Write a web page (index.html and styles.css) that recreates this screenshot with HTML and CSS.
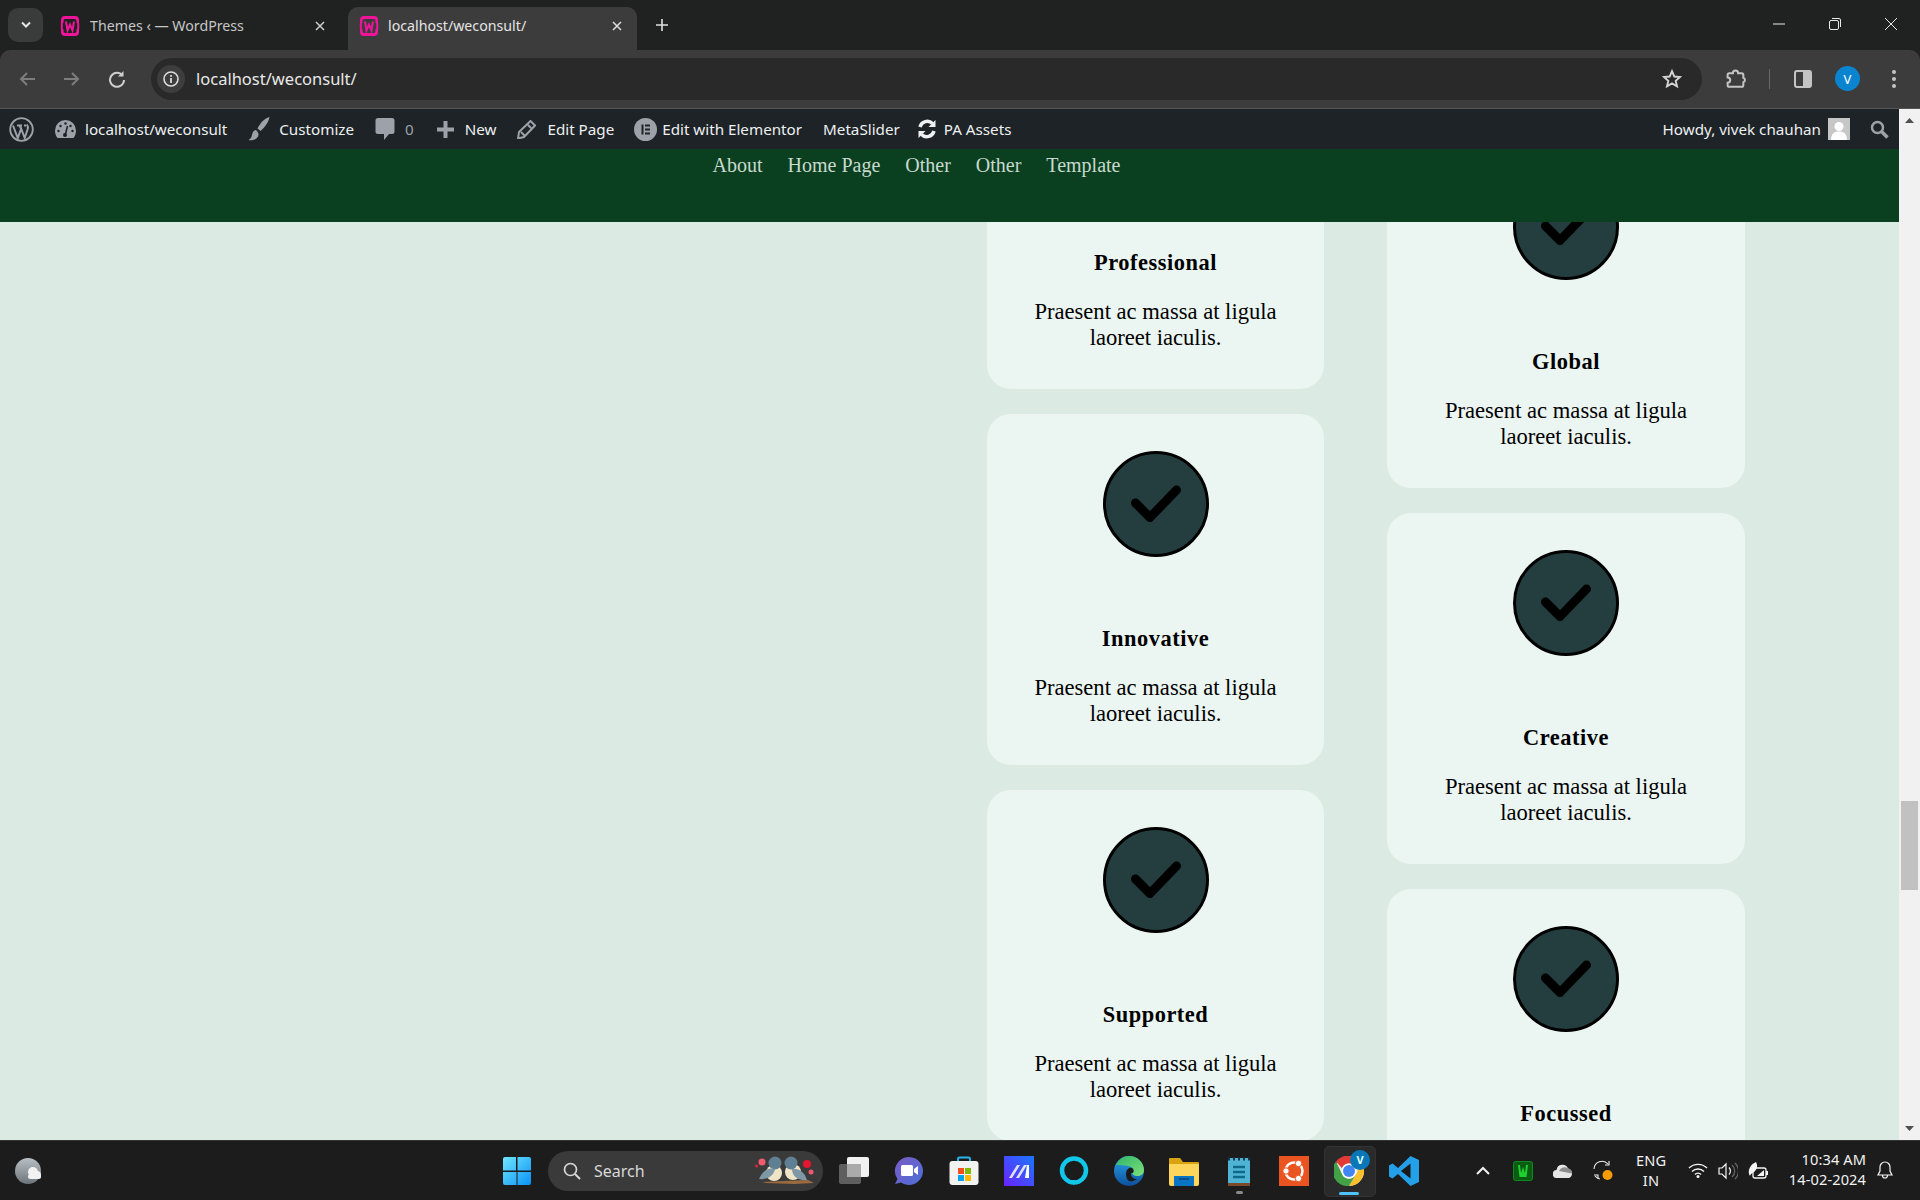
FILE: index.html
```html
<!DOCTYPE html>
<html lang="en">
<head>
<meta charset="utf-8">
<title>localhost/weconsult/</title>
<link rel="stylesheet" href="styles.css">
</head>
<body>
<svg class="defs" width="0" height="0" aria-hidden="true">
  <symbol id="wamp" viewBox="0 0 20 20">
    <path d="M5 0h10a4 4 0 0 1 4 4v3h-2.500V5a2 2 0 0 0-2-2h-9a2 2 0 0 0-2 2v2H1V4a4 4 0 0 1 4-4zM1 13h2.500v2a2 2 0 0 0 2 2h9a2 2 0 0 0 2-2v-2H19v3a4 4 0 0 1-4 4H5a4 4 0 0 1-4-4z" fill="#f0149b"/>
    <path d="M0.800 7h2v6h-2zM17.200 7h2v6h-2z" fill="#f0149b"/>
    <path d="M6 5.500l1.500 9 2.500-6 2.500 6 1.500-9" fill="none" stroke="#f0149b" stroke-width="2"/>
  </symbol>
  <symbol id="check" viewBox="0 0 106 106">
    <circle cx="53" cy="53" r="51.500" fill="#243e40" stroke="#000" stroke-width="3"/>
    <path d="M32.500 52l14.500 14.500L73.500 39" fill="none" stroke="#000" stroke-width="9" stroke-linecap="round" stroke-linejoin="round"/>
  </symbol>
</svg>
<div class="window">
  <header class="tabstrip">
    <button class="tabsearch"><svg width="12" height="8" viewBox="0 0 12 8"><path d="M2 1.500l4 4 4-4" fill="none" stroke="#e6e6e6" stroke-width="2"/></svg></button>
    <div class="tab">
      <svg class="favicon" width="20" height="20"><use href="#wamp"/></svg>
      <span class="tab-title dim">Themes ‹ — WordPress</span>
      <svg class="tab-close" width="10" height="10" viewBox="0 0 10 10"><path d="M1 1l8 8M9 1l-8 8" stroke="#d0d0d0" stroke-width="1.500"/></svg>
    </div>
    <div class="tab active">
      <svg class="favicon" width="20" height="20"><use href="#wamp"/></svg>
      <span class="tab-title">localhost/weconsult/</span>
      <svg class="tab-close" width="10" height="10" viewBox="0 0 10 10"><path d="M1 1l8 8M9 1l-8 8" stroke="#e0e0e0" stroke-width="1.500"/></svg>
    </div>
    <svg class="newtab" width="14" height="14" viewBox="0 0 14 14"><path d="M7 1v12M1 7h12" stroke="#e0e0e0" stroke-width="1.600"/></svg>
    <div class="winctl">
      <svg width="14" height="14" viewBox="0 0 14 14"><path d="M1 7h12" stroke="#e8e8e8"/></svg>
      <svg width="14" height="14" viewBox="0 0 14 14"><rect x="1.500" y="3.500" width="9" height="9" rx="1.500" fill="none" stroke="#e8e8e8"/><path d="M4 1.500h7a1.500 1.500 0 0 1 1.500 1.500v7" fill="none" stroke="#e8e8e8"/></svg>
      <svg width="14" height="14" viewBox="0 0 14 14"><path d="M1 1l12 12M13 1L1 13" stroke="#e8e8e8"/></svg>
    </div>
  </header>

  <nav class="toolbar">
    <svg class="tool-back" width="18" height="16" viewBox="0 0 18 16"><path d="M17 8H3M9 2L3 8l6 6" fill="none" stroke="#7d7d7d" stroke-width="2"/></svg>
    <svg class="tool-fwd" width="18" height="16" viewBox="0 0 18 16"><path d="M1 8h14M9 2l6 6-6 6" fill="none" stroke="#7d7d7d" stroke-width="2"/></svg>
    <svg class="tool-reload" width="18" height="18" viewBox="0 0 18 18"><path d="M14.500 5.500A7 7 0 1 0 16 10" fill="none" stroke="#cfcfcf" stroke-width="2"/><path d="M15.500 1v5.500H10z" fill="#cfcfcf"/></svg>
    <div class="omnibox">
      <span class="infochip"><svg width="16" height="16" viewBox="0 0 16 16"><circle cx="8" cy="8" r="7" fill="none" stroke="#dcdcdc" stroke-width="1.600"/><path d="M8 7v5M8 4v1.800" stroke="#dcdcdc" stroke-width="1.800"/></svg></span>
      <span class="url">localhost/weconsult/</span>
      <svg class="star" width="20" height="20" viewBox="0 0 20 20"><path d="M10 2.200l2.300 5.300 5.700.5-4.300 3.800 1.300 5.600-5-3-5 3 1.300-5.600L2 8l5.700-.5z" fill="none" stroke="#d4d4d4" stroke-width="1.900"/></svg>
    </div>
    <svg class="ext" width="22" height="22" viewBox="0 0 21 21"><path d="M4 5h3.500a2.500 2.500 0 0 1 5 0H16a1.500 1.500 0 0 1 1.500 1.500v2.800a2.200 2.200 0 0 1 0 4.200v3A1.500 1.500 0 0 1 16 18H4a1.500 1.500 0 0 1-1.500-1.500V14a2.500 2.500 0 0 0 0-5V6.500A1.500 1.500 0 0 1 4 5z" fill="none" stroke="#c4c4c4" stroke-width="1.900"/></svg>
    <span class="tool-sep"></span>
    <svg class="panel" width="18" height="18" viewBox="0 0 18 18"><rect x="1" y="1" width="16" height="16" rx="2" fill="none" stroke="#c4c4c4" stroke-width="2"/><rect x="9" y="1" width="8" height="16" fill="#c4c4c4"/></svg>
    <span class="profile">V</span>
    <svg class="dots" width="4" height="18" viewBox="0 0 4 18"><circle cx="2" cy="2" r="2" fill="#c4c4c4"/><circle cx="2" cy="9" r="2" fill="#c4c4c4"/><circle cx="2" cy="16" r="2" fill="#c4c4c4"/></svg>
  </nav>

  <div class="viewport">
    <div class="page">
      <div class="adminbar">
        <svg class="wp-logo" width="25" height="25" viewBox="0 0 25 25"><circle cx="12.500" cy="12.500" r="11.300" fill="none" stroke="#9ca2a7" stroke-width="1.800"/><path d="M4 8.500l4.800 12.500 3.200-9-1.400-3.500M8 8.500h5M11 8.500l4.700 12.500 3-9c.8-2.500-.2-3.500-1-4.500M15 8.500h2" fill="none" stroke="#9ca2a7" stroke-width="2"/></svg>
        <span class="ab-item"><svg class="ab-i9" width="21" height="18" viewBox="0 0 21 18"><path d="M10.500 0A10.500 10.500 0 0 0 0 10.500c0 3 1 5.500 2.500 7.500h16c1.500-2 2.500-4.500 2.500-7.500A10.500 10.500 0 0 0 10.500 0z" fill="#9ca2a7"/><circle cx="10.500" cy="3.500" r="1.200" fill="#1d2327"/><circle cx="5.500" cy="6" r="1.200" fill="#1d2327"/><circle cx="15.500" cy="6" r="1.200" fill="#1d2327"/><circle cx="3.500" cy="11" r="1.200" fill="#1d2327"/><circle cx="17.500" cy="11" r="1.200" fill="#1d2327"/><path d="M12.500 6l-2 8" stroke="#1d2327" stroke-width="1.500"/><circle cx="10" cy="15" r="2" fill="#1d2327"/></svg><span>localhost/weconsult</span></span>
        <span class="ab-item"><svg class="ab-i9" width="22" height="24" viewBox="0 0 22 24"><path d="M21.500 0c-5 1.500-9 5.500-12 11.500l3 2.500C17 10 20.500 5.500 21.500 0zM8 13c-3 .5-3.500 3-4 5-.3 2-1.500 4-3.500 5 4 .8 8-.5 9.500-3.500 1-1.800.7-4-2-6.500z" fill="#9ca2a7"/></svg><span>Customize</span></span>
        <span class="ab-item ab-comments"><svg class="ab-i10" width="20" height="24" viewBox="0 0 20 24"><path d="M3 1h14a2.500 2.500 0 0 1 2.500 2.500v11A2.500 2.500 0 0 1 17 17h-3l-5 6v-6H3a2.500 2.500 0 0 1-2.500-2.500v-11A2.500 2.500 0 0 1 3 1z" fill="#9ca2a7"/></svg><span class="muted">0</span></span>
        <span class="ab-item"><svg class="ab-i11" width="17" height="17" viewBox="0 0 17 17"><path d="M6.500 0h4v6.500H17v4h-6.500V17h-4v-6.500H0v-4h6.500z" fill="#9ca2a7"/></svg><span>New</span></span>
        <span class="ab-item"><svg class="ab-i11" width="19" height="19" viewBox="0 0 19 19"><path d="M13.500 1l4.500 4.500L7 17l-6 1.500L2 12zM4 12l3.500 3.500M11 5l3 3" fill="none" stroke="#9ca2a7" stroke-width="2"/></svg><span>Edit Page</span></span>
        <span class="ab-item ab-elementor"><svg class="ab-i5" width="23" height="23" viewBox="0 0 23 23"><circle cx="11.500" cy="11.500" r="11.500" fill="#9ca2a7"/><path d="M7.500 6.500h2v10h-2zM11 6.500h5v2h-5zM11 10.500h5v2h-5zM11 14.500h5v2h-5z" fill="#1d2327"/></svg><span>Edit with Elementor</span></span>
        <span class="ab-item"><span>MetaSlider</span></span>
        <span class="ab-item ab-assets"><svg class="ab-i7" width="20" height="20" viewBox="0 0 20 20"><path d="M3 8a7.500 7.500 0 0 1 12.500-3.500M17 12a7.500 7.500 0 0 1-12.500 3.500" fill="none" stroke="#eef0f1" stroke-width="3.500"/><path d="M18.500 1v7h-7zM1.500 19v-7h7z" fill="#eef0f1"/></svg><span>PA Assets</span></span>
        <span class="ab-right">
          <span>Howdy, vivek chauhan</span>
          <svg class="ab-avatar" width="22" height="22" viewBox="0 0 22 22"><rect width="22" height="22" fill="#c6c6c6"/><circle cx="11" cy="8.500" r="4.500" fill="#fff"/><path d="M3 22c0-6 3-8.500 8-8.500s8 2.500 8 8.500z" fill="#fff"/></svg>
          <svg class="ab-search" width="19" height="19" viewBox="0 0 19 19"><circle cx="7.500" cy="7.500" r="5.500" fill="none" stroke="#9ca2a7" stroke-width="2.500"/><path d="M11.500 11.500l6 6" stroke="#9ca2a7" stroke-width="3.500"/></svg>
        </span>
      </div>
      <div class="siteheader">
        <a class="navlink">About</a>
        <a class="navlink">Home Page</a>
        <a class="navlink">Other</a>
        <a class="navlink">Other</a>
        <a class="navlink">Template</a>
      </div>
      <main class="content">
        <section class="col col-a">
          <article class="card"><svg class="badge" width="106" height="106"><use href="#check"/></svg><h3>Professional</h3><p>Praesent ac massa at ligula laoreet iaculis.</p></article>
          <article class="card"><svg class="badge" width="106" height="106"><use href="#check"/></svg><h3>Innovative</h3><p>Praesent ac massa at ligula laoreet iaculis.</p></article>
          <article class="card"><svg class="badge" width="106" height="106"><use href="#check"/></svg><h3>Supported</h3><p>Praesent ac massa at ligula laoreet iaculis.</p></article>
        </section>
        <section class="col col-b">
          <article class="card"><svg class="badge" width="106" height="106"><use href="#check"/></svg><h3>Global</h3><p>Praesent ac massa at ligula laoreet iaculis.</p></article>
          <article class="card"><svg class="badge" width="106" height="106"><use href="#check"/></svg><h3>Creative</h3><p>Praesent ac massa at ligula laoreet iaculis.</p></article>
          <article class="card"><svg class="badge" width="106" height="106"><use href="#check"/></svg><h3>Focussed</h3></article>
        </section>
      </main>
    </div>
    <aside class="scrollbar">
      <svg width="9" height="5" viewBox="0 0 9 5"><path d="M4.500 0L9 5H0z" fill="#505050"/></svg>
      <span class="thumb"></span>
      <svg width="9" height="5" viewBox="0 0 9 5"><path d="M0 0h9L4.500 5z" fill="#505050"/></svg>
    </aside>
  </div>

  <footer class="taskbar">
    <svg class="tb-widget" width="30" height="30" viewBox="0 0 30 30"><defs><linearGradient id="wg" x1="0" y1="0" x2="0" y2="1"><stop offset="0" stop-color="#b8bfc4"/><stop offset="1" stop-color="#6d757c"/></linearGradient></defs><ellipse cx="14" cy="15" rx="13" ry="13" fill="url(#wg)"/><circle cx="19" cy="16" r="5" fill="#f2f2f2"/><circle cx="23" cy="19" r="4" fill="#f2f2f2"/><rect x="14" y="18" width="13" height="5" rx="2.500" fill="#f2f2f2"/></svg>
    <div class="tb-center">
      <svg width="30" height="30" viewBox="0 0 30 30"><defs><linearGradient id="win" x1="0" y1="0" x2="1" y2="1"><stop offset="0" stop-color="#6fe6ff"/><stop offset="1" stop-color="#0a92f5"/></linearGradient></defs><path d="M1 3a2 2 0 0 1 2-2h11v13.500H1zM15.500 1H27a2 2 0 0 1 2 2v11.500H15.500zM1 16h13.500v13H3a2 2 0 0 1-2-2zM15.500 16H29v11a2 2 0 0 1-2 2H15.500z" fill="url(#win)"/></svg>
      <div class="searchpill">
        <svg width="18" height="18" viewBox="0 0 18 18"><circle cx="7.500" cy="7.500" r="6" fill="none" stroke="#d8d8d8" stroke-width="1.700"/><path d="M12 12l5 5" stroke="#d8d8d8" stroke-width="1.900"/></svg>
        <span>Search</span>
        <svg class="birds" width="60" height="30" viewBox="0 0 60 30"><path d="M7 26l46-2 6 3-20 1-28-1z" fill="#9b6b3f"/><ellipse cx="19" cy="17" rx="8" ry="8" fill="#f0e4c8"/><circle cx="20" cy="7" r="6.500" fill="#5f7f92"/><path d="M4 23c4-9 10-12 16-10-1 6-7 11-16 10z" fill="#7f98a6"/><ellipse cx="38" cy="16" rx="8" ry="8" fill="#f0e4c8"/><circle cx="36" cy="7" r="6.500" fill="#5f7f92"/><path d="M52 24c-3-9-9-12-15-11 0 7 6 12 15 11z" fill="#7f98a6"/><circle cx="7" cy="6" r="3.500" fill="#ef5a6f"/><circle cx="1.500" cy="10" r="1.500" fill="#e0233a"/><circle cx="52" cy="8" r="4" fill="#e5172f"/><circle cx="56" cy="16" r="2.500" fill="#ef5a6f"/></svg>
      </div>
      <svg class="tb-task" width="30" height="30" viewBox="0 0 30 30"><rect x="0" y="8" width="22" height="20" rx="2" fill="#5f5f5f"/><rect x="8" y="1" width="22" height="20" rx="2" fill="#f1f1f1"/><rect x="8" y="8" width="14" height="13" fill="#aaa"/></svg>
      <svg width="30" height="30" viewBox="0 0 30 30"><defs><linearGradient id="meet" x1="0" y1="0" x2="1" y2="1"><stop offset="0" stop-color="#7a5cc6"/><stop offset="1" stop-color="#4c6fd8"/></linearGradient></defs><path d="M15 1a14 14 0 1 1-8 25.500L1 28l2.500-5A14 14 0 0 1 15 1z" fill="url(#meet)"/><rect x="7" y="9" width="12" height="11" rx="1.500" fill="#fff"/><path d="M20 13l4-3v9l-4-3z" fill="#fff"/></svg>
      <svg width="30" height="30" viewBox="0 0 30 30"><path d="M9 6V3a1.500 1.500 0 0 1 1.500-1.500h9A1.500 1.500 0 0 1 21 3v3" fill="none" stroke="#28b4ea" stroke-width="2"/><rect x="0.500" y="5" width="29" height="24" rx="3" fill="#f2f2f2"/><rect x="9" y="12" width="6" height="6" fill="#f25022"/><rect x="16" y="12" width="6" height="6" fill="#7fba00"/><rect x="9" y="19" width="6" height="6" fill="#00a4ef"/><rect x="16" y="19" width="6" height="6" fill="#ffb900"/></svg>
      <svg width="30" height="30" viewBox="0 0 30 30"><defs><linearGradient id="ma" x1="0" y1="1" x2="1" y2="0"><stop offset="0" stop-color="#6a22ff"/><stop offset="1" stop-color="#1a78ff"/></linearGradient></defs><rect width="30" height="30" fill="url(#ma)"/><path d="M5 22L13 9h3L8 22zM12 22l8-13h3l-8 13z" fill="#dfe3ff"/><path d="M21 22l2-13h2v13z" fill="#fff"/></svg>
      <svg width="30" height="30" viewBox="0 0 30 30"><circle cx="15" cy="14.500" r="12" fill="none" stroke="#12c6ea" stroke-width="4.500"/><path d="M9 24l6 5 1-5z" fill="#12c6ea"/></svg>
      <svg width="30" height="30" viewBox="0 0 30 30"><defs><linearGradient id="edge" x1="0" y1="0" x2="1" y2="1"><stop offset="0" stop-color="#2fb56a"/><stop offset="1" stop-color="#7fe07a"/></linearGradient><linearGradient id="edge2" x1="0" y1="0" x2="0" y2="1"><stop offset="0" stop-color="#29a8e8"/><stop offset="1" stop-color="#0d4f9c"/></linearGradient></defs><circle cx="15" cy="15" r="15" fill="url(#edge2)"/><path d="M2 9C5 3 10 0 15 0c8 0 15 6 15 14 0 4-3 6-7 6-3 0-4-1-5-3 2-1 2-3 0-5-3-3-10-3-16-3z" fill="url(#edge)"/><path d="M12 18c0-4 3-7 6-6 2 1 2 3 1 5-2-1-3 1-1 4 1.500 2 4 2 5 2-3 2-6 3-8 2-2-1-3-4-3-7z" fill="#1a1a1a"/></svg>
      <svg width="30" height="30" viewBox="0 0 30 30"><path d="M0 3a1 1 0 0 1 1-1h10l3 4h15a1 1 0 0 1 1 1v4H0z" fill="#d9a312"/><path d="M0 8h30v20a2 2 0 0 1-2 2H2a2 2 0 0 1-2-2z" fill="#ffd65c"/><path d="M5 20h20v10H5z" fill="#0a74c4"/><path d="M10 23h10" stroke="#0f4d85" stroke-width="2"/></svg>
      <span class="tb-note"><svg width="30" height="30" viewBox="0 0 30 30"><rect x="4" y="2" width="22" height="27" fill="#4fb4d4"/><path d="M4 27h22v3H4z" fill="#7a4a2a"/><path d="M4 3h22" stroke="#16344a" stroke-width="3" stroke-dasharray="2 3"/><path d="M9 11h12M9 16h12M9 21h12" stroke="#0e6a8a" stroke-width="2.500"/></svg></span>
      <svg width="30" height="30" viewBox="0 0 30 30"><rect width="30" height="30" fill="#e95420"/><circle cx="15" cy="15" r="8.500" fill="none" stroke="#fff" stroke-width="2.500"/><circle cx="7" cy="15" r="3.200" fill="#fff" stroke="#e95420"/><circle cx="19.500" cy="7.500" r="3.200" fill="#fff" stroke="#e95420"/><circle cx="19.500" cy="22.500" r="3.200" fill="#fff" stroke="#e95420"/></svg>
      <span class="tb-chrome">
        <svg width="30" height="30" viewBox="0 0 30 30"><circle cx="15" cy="15" r="15" fill="#e8eaed"/><path d="M15 0a15 15 0 0 1 13 7.500H15a7.500 7.500 0 0 0-7 4.800L2 5.500A15 15 0 0 1 15 0z" fill="#e53935"/><path d="M28 7.500A15 15 0 0 1 15 30l6.500-11.200A7.500 7.500 0 0 0 21 7.500z" fill="#fbc02d"/><path d="M15 30A15 15 0 0 1 2 5.500L8.500 19a7.500 7.500 0 0 0 13 0z" fill="#43a047"/><circle cx="15" cy="15" r="7.500" fill="#fff"/><circle cx="15" cy="15" r="6" fill="#4285f4"/></svg>
        <span class="tb-chrome-badge">V</span>
      </span>
      <svg width="30" height="30" viewBox="0 0 30 30"><path d="M21.500 0L30 4v22l-8.500 4L9 18l-5.500 4.500L0 20.500V9.500L3.500 7.500 9 12z" fill="#23a0e8"/><path d="M21.500 7.500L12 15l9.500 7.500z" fill="#1a1a1a"/></svg>
    </div>
    <div class="tray">
      <svg class="tr-chev" width="14" height="9" viewBox="0 0 14 9"><path d="M1 8l6-6 6 6" fill="none" stroke="#f2f2f2" stroke-width="2"/></svg>
      <svg class="tr-wamp" width="20" height="20" viewBox="0 0 20 20"><rect x=".5" y=".5" width="19" height="19" rx="2" fill="#0a5c12" stroke="#0f8a1c"/><path d="M5 4l1.500 12h7L15 4h-2l-1 8-2-6-2 6-1-8z" fill="#1fd12f"/></svg>
      <svg class="tr-cloud" width="20" height="14" viewBox="0 0 20 14"><path d="M4 14a4 4 0 0 1-.5-8A6 6 0 0 1 15 4.500 5 5 0 0 1 16 14z" fill="#e6e6e6"/><path d="M6 7a6 6 0 0 1 9-2.500 5 5 0 0 1 4 5z" fill="#8c8c8c"/></svg>
      <svg class="tr-sync" width="20" height="21" viewBox="0 0 20 21"><path d="M1 9a8 8 0 0 1 14-5M2 16a8 8 0 0 0 5 3" fill="none" stroke="#f0f0f0" stroke-width="1.100"/><path d="M16 1v4h-4M1 15h4v4" fill="none" stroke="#f0f0f0" stroke-width="1.100"/><circle cx="14.500" cy="15" r="5" fill="#f59b00"/></svg>
      <span class="tr-lang">ENG<br>IN</span>
      <svg class="tr-wifi" width="20" height="15" viewBox="0 0 20 15"><path d="M1 5a13 13 0 0 1 18 0M4 8.500a8.500 8.500 0 0 1 12 0M7 11.500a4 4 0 0 1 6 0" fill="none" stroke="#f5f5f5" stroke-width="1.400"/><circle cx="10" cy="13.500" r="1.500" fill="#f5f5f5"/></svg>
      <svg class="tr-vol" width="20" height="18" viewBox="0 0 20 18"><path d="M1 6h3l4-4v14l-4-4H1z" fill="none" stroke="#f5f5f5" stroke-width="1.200"/><path d="M11 5.500a5 5 0 0 1 0 7" fill="none" stroke="#f5f5f5" stroke-width="1.200"/><path d="M14 3a8 8 0 0 1 0 12M17 1a11 11 0 0 1 0 16" fill="none" stroke="#6a6a6a" stroke-width="1.200"/></svg>
      <svg class="tr-batt" width="20" height="20" viewBox="0 0 20 20"><rect x="5" y="7" width="13" height="10" rx="2" fill="none" stroke="#f5f5f5" stroke-width="1.300"/><rect x="18" y="10" width="2" height="4" fill="#f5f5f5"/><path d="M1 13c-1-5 2-10 7-12 2 4 1 7-1 9-2 2-4 2-5 5z" fill="#f5f5f5"/><path d="M9 15l7-6v6z" fill="#f5f5f5"/></svg>
      <span class="tr-clock">10:34 AM<br>14-02-2024</span>
      <svg class="tr-bell" width="16" height="19" viewBox="0 0 16 19"><path d="M8 1a5 5 0 0 1 5 5v4l2 4H1l2-4V6a5 5 0 0 1 5-5zM5.500 14.500a2.500 2.500 0 0 0 5 0" fill="none" stroke="#f5f5f5" stroke-width="1.200"/></svg>
    </div>
  </footer>
</div>
</body>
</html>
```
FILE: styles.css
```css
* { box-sizing: border-box; }
html, body { margin: 0; padding: 0; height: 100%; overflow: hidden; }
body { font-family: "Noto Sans", sans-serif; background: #202222; }
.defs { display: block; height: 0; }
.window { width: 1920px; height: 1200px; display: flex; flex-direction: column; overflow: hidden; }

/* tab strip */
.tabstrip { height: 50px; background: #202222; display: flex; align-items: flex-end; flex: none; color: #ddd; font-size: 14.200px; }
.tabsearch { width: 35px; height: 34px; margin: 0 0 8px 8px; border: 0; border-radius: 10px; background: #3a3b3b; display: flex; align-items: center; justify-content: center; padding: 0; }
.tab { width: 298px; height: 43px; margin-left: 7px; display: flex; align-items: center; padding: 0 22px 6px 10px; border-radius: 10px 10px 0 0; }
.tab.active { width: 289px; background: #3c3c3c; margin-left: 0; padding: 0 14px 6px 11px; }
.favicon { flex: none; margin-right: 10px; }
.tab.active .favicon { margin-right: 9px; }
.tab-title { flex: 1; white-space: nowrap; color: #e4e4e4; }
.tab-title.dim { color: #c6c6c6; }
.tab-close { flex: none; margin-right: 1px; }
.newtab { margin: 0 0 18px 18px; }
.winctl { margin: 0 22px 19px auto; display: flex; gap: 42px; }

/* toolbar */
.toolbar { height: 59px; flex: none; background: #3c3c3c; border-radius: 10px 10px 0 0; border-bottom: 1px solid #555; display: flex; align-items: center; padding-bottom: 1px; }
.tool-back { margin-left: 18px; }
.tool-fwd { margin-left: 27px; }
.tool-reload { margin-left: 27px; }
.omnibox { width: 1551px; height: 42px; margin-left: 25px; background: #292929; border-radius: 21px; display: flex; align-items: center; padding: 0 20px 0 6px; }
.infochip { width: 28px; height: 28px; border-radius: 50%; background: #3d3d3d; display: flex; align-items: center; justify-content: center; flex: none; }
.url { margin-left: 11px; color: #e8e8e8; font-size: 16.500px; flex: 1; }
.star { flex: none; }
.ext { margin-left: 23px; }
.tool-sep { width: 1px; height: 20px; background: #666; margin-left: 22px; }
.panel { margin-left: 24px; }
.profile { width: 25px; height: 25px; margin-left: 23px; border-radius: 50%; background: #0b84d0; color: #fff; font-size: 13px; display: flex; align-items: center; justify-content: center; }
.dots { margin-left: 32px; }

/* viewport */
.viewport { flex: 1; min-height: 0; display: flex; }
.page { flex: 1; min-width: 0; display: flex; flex-direction: column; background: #dbeae2; }
.adminbar { height: 40px; flex: none; background: #1d2327; display: flex; align-items: center; gap: 21px; padding-left: 9px; padding-right: 10px; color: #eef0f1; font-size: 15.200px; white-space: nowrap; }
.ab-item { display: flex; align-items: center; }
.ab-comments { margin-right: 2px; }
.ab-elementor { margin-left: -1px; }
.ab-assets { margin-left: -4px; }
.ab-i5 { margin-right: 5px; }
.ab-i7 { margin-right: 7px; }
.ab-i9 { margin-right: 9px; }
.ab-i10 { margin-right: 10px; }
.ab-i11 { margin-right: 11px; }
.muted { color: #9ca2a7; }
.ab-right { margin-left: auto; display: flex; align-items: center; }
.ab-avatar { margin-left: 7px; }
.ab-search { margin-left: 20px; }

.siteheader { height: 73px; flex: none; background: #0a401f; display: flex; justify-content: center; gap: 25px; padding: 5px 66px 0 0; position: relative; z-index: 1; font-family: "Liberation Serif", serif; font-size: 20px; line-height: 23px; }
.navlink { color: #c8d9cf; }

.content { flex: 1; min-height: 0; overflow: hidden; display: flex; align-items: flex-start; gap: 63px; padding-left: 987px; font-family: "Liberation Serif", serif; color: #000; }
.col { display: flex; flex-direction: column; gap: 25px; flex: none; }
.col-a { width: 337px; margin-top: -184px; }
.col-b { width: 358px; margin-top: -85px; }
.card { height: 351px; background: #ebf5f1; border-radius: 24px; padding-top: 37px; text-align: center; flex: none; }
.badge { display: block; margin: 0 auto; }
.card h3 { margin: 69px 0 24px; font-size: 22.400px; line-height: 25px; font-weight: 700; letter-spacing: .55px; }
.card p { margin: 0 auto; width: 260px; font-size: 22.600px; line-height: 25.500px; }

.scrollbar { width: 21px; flex: none; background: #f1f1f1; display: flex; flex-direction: column; align-items: center; padding: 9px 0 9px; }
.thumb { width: 17px; height: 89px; background: #c1c1c1; margin: 678px 0 auto; }

/* taskbar */
.taskbar { height: 60px; flex: none; background: #1c1c1c; border-top: 1px solid #333; display: flex; align-items: center; color: #f2f2f2; position: relative; }
.tb-widget { margin-left: 14px; flex: none; }
.tb-center { margin-left: 458px; display: flex; align-items: center; gap: 25px; flex: none; }
.searchpill { width: 275px; height: 40px; margin: 0 -9px; background: #3a3a3a; border-radius: 20px; display: flex; align-items: center; padding: 0 8px 0 15px; font-size: 16px; color: #d8d8d8; }
.searchpill span { margin-left: 13px; flex: 1; }
.birds { flex: none; }
.tb-note { position: relative; display: flex; }
.tb-note::after { content: ""; position: absolute; left: 12px; bottom: -8px; width: 7px; height: 3px; border-radius: 2px; background: #8a8a8a; }
.tb-chrome { position: relative; display: flex; z-index: 0; }
.tb-chrome::before { content: ""; position: absolute; left: -10px; top: -10px; width: 50px; height: 49px; background: #2a2a2a; border: 1px solid #333; border-radius: 5px; z-index: -1; }
.tb-chrome::after { content: ""; position: absolute; left: 5px; bottom: -9px; width: 20px; height: 3px; border-radius: 2px; background: #4fc3f7; }
.tb-chrome-badge { position: absolute; left: 16px; top: -6px; width: 20px; height: 20px; border-radius: 50%; background: #0a78b8; color: #dff; font-size: 11px; font-weight: 700; display: flex; align-items: center; justify-content: center; }
.tray { margin-left: 57px; display: flex; align-items: center; flex: none; font-size: 14.600px; line-height: 20px; }
.tr-wamp { margin-left: 23px; }
.tr-cloud { margin-left: 20px; }
.tr-sync { margin-left: 20px; }
.tr-lang { margin-left: 23px; width: 30px; text-align: center; letter-spacing: .2px; padding-bottom: 2px; }
.tr-wifi { margin-left: 22px; }
.tr-vol { margin-left: 10px; }
.tr-batt { margin-left: 10px; }
.tr-clock { margin-left: 10px; width: 88px; text-align: right; letter-spacing: .1px; padding-bottom: 3px; }
.tr-bell { margin-left: 11px; }
```
